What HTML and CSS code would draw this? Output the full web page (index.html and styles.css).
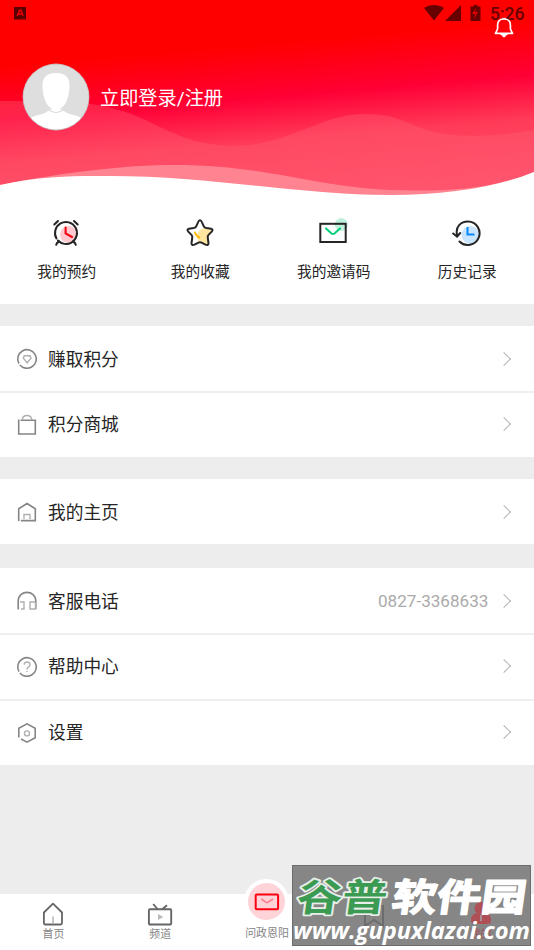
FILE: index.html
```html
<!DOCTYPE html>
<html lang="zh-CN">
<head>
<meta charset="utf-8">
<title>我的</title>
<link rel="stylesheet" href="styles.css">
</head>
<body>
<div class="app">
  <header class="hero">
    <svg class="hero-bg" viewBox="0 0 534 200">
      <defs>
        <linearGradient id="sky" gradientUnits="userSpaceOnUse" x1="250" y1="0" x2="267" y2="200">
          <stop offset="0" stop-color="#ff0000"/><stop offset=".22" stop-color="#ff0000"/>
          <stop offset=".49" stop-color="#ff0035"/><stop offset=".53" stop-color="#ff0a3c"/><stop offset=".71" stop-color="#ff3b58"/><stop offset="1" stop-color="#ff5068"/>
        </linearGradient>
        <linearGradient id="wave" gradientUnits="userSpaceOnUse" x1="0" y1="100" x2="0" y2="195">
          <stop offset="0" stop-color="#ff667a" stop-opacity=".34"/><stop offset="1" stop-color="#ff5a70" stop-opacity=".4"/>
        </linearGradient>
      </defs>
      <rect width="534" height="200" fill="url(#sky)"/>
      <path d="M0 101C40 101 65 102 90 104C145 111 160 134 205 143C280 157 312 114 365 114C405 114 412 130 445 134C477 138 505 135 534 130V200H0Z" fill="url(#wave)"/>
      <path d="M0 185C65 172 125 165 175 165C265 165 315 187 390 190C450 192 495 188 534 172V200H0Z" fill="#ff8391"/>
      <path d="M0 185C45 175 80 176 110 176C210 176 300 195 390 195C450 195 500 186 534 172V200H0Z" fill="#fff"/>
    </svg>
    <div class="status">
      <svg width="13" height="13" viewBox="0 0 13 13"><rect width="12" height="12.5" fill="#590000"/><path d="M3.3 9 5.5 3.3H7L9 9M4.3 7H8" fill="none" stroke="#f00000" stroke-width="1.5"/><path d="M7 11.5h4" stroke="#a00000" stroke-width=".7"/></svg>
      <div class="status-right">
        <svg width="58" height="17" viewBox="0 0 58 17" fill="#690000"><path d="M0 3C6-1 14-1 20 3L10 15.5Z"/><path d="M37 0V16H21Z"/><path d="M46.5 1.5h3V0h4v1.5h3V16h-10z"/><path d="m52 3-4 6h3l-1 5 4-7h-3z" fill="#e00008"/></svg>
        <span>5:26</span>
      </div>
    </div>
    <svg class="bell" width="20" height="21" viewBox="0 0 20 21"><path d="M1.5 16.4H18.5L16.4 12V8Q16.4 2 10 2Q3.6 2 3.6 8V12Z" fill="none" stroke="#fff" stroke-width="1.7" stroke-linejoin="round"/><path d="M8 1.4h4M6.5 17h7q-1 1.2-3.5 3.2Q7.5 18.2 6.5 17Z" fill="#fff" stroke="#fff" stroke-width=".8"/></svg>
    <div class="profile">
      <svg width="68" height="68" viewBox="0 0 68 68">
        <defs><clipPath id="face"><circle cx="34" cy="34" r="32.6"/></clipPath></defs>
        <circle cx="34" cy="34" r="33.4" fill="#c8b8ba"/><circle cx="34" cy="34" r="32.6" fill="#dedede"/>
        <path clip-path="url(#face)" d="M27 46C26 51 16 51 8 55V68H60V55C52 51 42 51 41 46Z" fill="#fff"/>
        <path d="M24 40Q28 49 34 49T44 40V46Q38 50 34 50T24 46Z" fill="#dedede"/>
        <path d="M34 10C43 10 48 14 47.5 24C47 35 43 46.500 34 46.500S21 35 20.500 24C20 14 25 10 34 10Z" fill="#fff"/>
      </svg>
      <span>立即登录/注册</span>
    </div>
  </header>

  <nav class="shortcuts">
    <a><svg width="30" height="30" viewBox="0 0 30 30"><circle cx="17.500" cy="16.500" r="8.500" fill="#ffc9cf"/><g fill="none" stroke="#252525" stroke-width="2" stroke-linecap="round"><circle class="clock-ring" cx="15" cy="15" r="11"/><path d="M3.300 6.500 7 3M23 3 26.700 6.500M5.200 26.800Q5.500 24.800 8 23.500M24.800 26.800Q24.500 24.800 22 23.500"/><path d="M14.600 9.500V15.500L21 19" stroke="#f4000e"/></g></svg><span>我的预约</span></a>
    <a><svg width="30" height="30" viewBox="0 0 30 30"><defs><clipPath id="star"><path d="M15 2 19 10 28 12 23 18 24 27 15 24 6 27 7 18 2 12 11 10Z"/></clipPath></defs><circle cx="20.500" cy="18.500" r="8.500" fill="#ffe6a0" clip-path="url(#star)"/><path d="M15 2.300Q16.200 2.300 17 4.300L18.800 8.300Q19.300 9.600 21.500 10L26 10.700Q28.700 11.300 26.700 13.600L23.500 16.900Q22.400 18 22.800 20L23.500 25Q23.500 28 20.500 26.700L16.500 24.600Q15 23.800 13.500 24.600L9.500 26.700Q6.500 28 6.500 25L7.200 20Q7.600 18 6.500 16.900L3.300 13.600Q1.300 11.300 4 10.700L8.500 10Q10.700 9.600 11.200 8.300L13 4.300Q13.800 2.300 15 2.300Z" fill="none" stroke="#252525" stroke-width="2"/><path d="M10 14.500Q11.500 18.500 14.300 19.500" fill="none" stroke="#ffb900" stroke-width="2" stroke-linecap="round"/></svg><span>我的收藏</span></a>
    <a><svg width="30" height="30" viewBox="0 0 30 30"><circle cx="23.300" cy="6.500" r="6.500" fill="#bff1dc"/><rect x="2.300" y="5.800" width="25.400" height="18.200" fill="none" stroke="#252525" stroke-width="2"/><path d="M8 10.500 13.500 15.500Q15 16.500 16.500 15.500L22 10.500" fill="none" stroke="#00ce79" stroke-width="2" stroke-linecap="round"/></svg><span>我的邀请码</span></a>
    <a><svg width="30" height="30" viewBox="0 0 30 30"><circle cx="18.500" cy="17" r="9" fill="#c9e4ff"/><path d="M5.200 17.500C2.800 8.500 9.200 3.600 16 3.600A11.700 11.700 0 1 1 7.500 23.500M1.200 15.500 5.100 18.700 8.200 15" fill="none" stroke="#252525" stroke-width="2" stroke-linecap="round"/><path d="M15.500 9V16.500H22.500" fill="none" stroke="#0589ff" stroke-width="2"/></svg><span>历史记录</span></a>
  </nav>

  <main class="groups">
    <section class="group">
      <div class="row"><svg class="icon" viewBox="0 0 22 22"><circle class="ring" cx="11" cy="11" r="9.300"/><path class="pale" d="M8.200 7.700H14L15 10.200 11.200 14.800 7.300 10.200Z"/></svg><span class="label">赚取积分</span><i class="arrow"></i></div>
      <div class="row"><svg class="icon" viewBox="0 0 22 22"><path d="M2.700 5.500V20H19.300V6.200H4.500"/><path class="pale" d="M6.200 6Q6.500 1.500 11 1.500T15.800 6"/></svg><span class="label">积分商城</span><i class="arrow"></i></div>
    </section>
    <section class="group">
      <div class="row"><svg class="icon" viewBox="0 0 22 22"><path d="M2.700 20V7.700L11 2.500 19.300 7.700V19.600H4.800"/><path class="pale" d="M8 18V13.500H14V18"/></svg><span class="label">我的主页</span><i class="arrow"></i></div>
    </section>
    <section class="group wide-gap">
      <div class="row"><svg class="icon" viewBox="0 0 22 22"><path d="M2.200 19.500V11C2.200-.5 19.800-.5 19.800 11V19"/><path class="pale" d="M4 12H8V19H5M19 12H14V19H19.500V12"/></svg><span class="label">客服电话</span><span class="phone">0827-3368633</span><i class="arrow"></i></div>
      <div class="row"><svg class="icon" viewBox="0 0 22 22"><circle class="ring" cx="11" cy="11" r="9.300"/><path class="pale" d="M8 8.500Q8.500 6 11.200 6T14 8.800Q14 10.400 12 11.500Q11 12 11 13.500M11 15V16"/></svg><span class="label">帮助中心</span><i class="arrow"></i></div>
      <div class="row"><svg class="icon" viewBox="0 0 22 22"><path d="M2.800 15.500V6.200L11 1.800 19.200 6.200V15.800L11 20.200 5 17"/><circle class="pale" cx="11" cy="11.400" r="2.500"/></svg><span class="label">设置</span><i class="arrow"></i></div>
    </section>
  </main>

  <div class="watermark-plate"></div>
  <footer class="tabs">
    <a class="tab"><svg width="26" height="24" viewBox="0 0 26 24" fill="none" stroke="#666" stroke-width="1.800" stroke-linejoin="round"><path d="M3.900 10.500 13 1.700 22 10.500V21Q22 22.500 20.500 22.500H5.400Q3.900 22.500 3.900 21Z"/><path d="M13 14.500V21" stroke="#aaa" stroke-width="1.300"/></svg><span>首页</span></a>
    <a class="tab"><svg width="26" height="24" viewBox="0 0 26 24" fill="none" stroke="#666" stroke-width="1.900" stroke-linejoin="round"><rect x="1.900" y="7.300" width="22.300" height="15.200" rx="1"/><path d="M6.200 2 10.500 7M20 3.200 15.500 7"/><path d="M11 12V18L16.300 15Z" fill="#bbb" stroke="none"/></svg><span>频道</span></a>
    <a class="tab tab-main"><div class="disc"><svg width="26" height="18" viewBox="0 0 26 18" fill="none" stroke-width="2"><rect x="1.700" y="1.500" width="22.400" height="14.800" rx="1" stroke="#fe0010"/><path d="M7.200 6 12 9.300Q13 9.800 14 9.300L19 6" stroke="#ff8290" stroke-width="1.700"/></svg></div><span>问政恩阳</span></a>
    <a class="tab tab-saved"><svg width="22" height="24" viewBox="0 0 22 24" fill="none" stroke="#333" stroke-width="2"><path d="M2 1V21L11 15 20 21V1Z"/></svg></a>
    <a class="tab tab-mine"><svg width="26" height="24" viewBox="0 0 26 24"><path d="M13 0A6.300 6.300 0 0 1 17.500 10.800Q23 13 23 17.500Q23 22 20 22H6Q3 22 3 17.500Q3 13 8.500 10.800A6.300 6.300 0 0 1 13 0Z" fill="#ed0010"/><path d="M13 13v6" stroke="#ddd" stroke-width="1.500"/></svg><span>我的</span></a>
  </footer>
  <div class="watermark">
    <svg width="239" height="81" viewBox="0 0 239 81">
      <g class="brand" transform="skewX(-8)"><text class="green" x="10" y="46.500" textLength="90" lengthAdjust="spacingAndGlyphs">谷普</text><text class="white" x="105" y="46.500" textLength="134" lengthAdjust="spacingAndGlyphs">软件园</text></g>
      <text class="site" x="1" y="73.500" textLength="237" lengthAdjust="spacingAndGlyphs">www.gupuxlazai.com</text>
    </svg>
  </div>
</div>
</body>
</html>
```
FILE: styles.css
```css
* { box-sizing: border-box; }
body { margin: 0; }
.app {
  width: 534px; height: 950px; position: relative; overflow: hidden;
  display: flex; flex-direction: column; background: #ededed; color: #252525;
  font-family: Roboto, "Noto Sans CJK SC", sans-serif;
}
svg { display: block; flex: none; }
.hero { height: 200px; position: relative; flex: none; background: #fff; }
.hero-bg { position: absolute; inset: 0; width: 534px; height: 200px; }
.status { position: relative; height: 28px; display: flex; justify-content: space-between; padding: 7px 9px 0 14px; }
.status-right { display: flex; gap: 8px; margin-top: -2px; color: #690000; }
.status-right span { font-size: 17.5px; line-height: 18px; font-weight: 500; width: 35px; }
.bell { position: absolute; right: 20px; top: 17px; }
.profile { position: relative; display: flex; align-items: center; gap: 10.5px; padding: 35px 0 0 21.5px; color: #fff; font-size: 19.2px; }
.profile span { padding-bottom: 1px; }
.shortcuts { height: 104px; flex: none; background: #fff; display: grid; grid-template-columns: repeat(4, 1fr); }
.shortcuts a { display: flex; flex-direction: column; align-items: center; gap: 13px; padding-top: 18px; font-size: 14.7px; line-height: 22px; }
.shortcuts svg { margin-left: -1px; }
.clock-ring { stroke-dasharray: 66.1 3; transform-origin: 15px 15px; transform: rotate(150deg); }
.groups { display: flex; flex-direction: column; gap: 22px; padding-top: 22px; }
.group { background: #fff; }
.wide-gap { margin-top: 2px; }
.row { height: 65px; display: flex; align-items: center; padding: 1px 20px 0 16px; }
.row + .row { height: 66px; border-top: 2px solid #efefef; padding: 0 20px 1px 16px; }
.icon { width: 22px; height: 22px; fill: none; stroke: #858585; stroke-width: 1.6; }
.ring { stroke-dasharray: 56.4 2; transform-origin: 11px 11px; transform: rotate(150deg); }
.pale { stroke: #b0b0b0; stroke-width: 1.4; }
.label { margin-left: 10px; font-size: 17.7px; line-height: 26px; flex: 1; padding-top: 1px; }
.phone { color: #aaa; font-size: 17.1px; margin-right: 10px; width: 111px; white-space: nowrap; padding-bottom: 1px; }
.arrow { width: 10px; height: 10px; border: solid #b2b2b2; border-width: 1.7px 1.7px 0 0; transform: rotate(45deg); margin: 0 5px 1px 0; }
.tabs { position: absolute; left: 0; right: 0; bottom: 0; height: 56px; background: #fff; display: grid; grid-template-columns: repeat(5, 1fr); color: #858585; font-size: 10.9px; line-height: 16px; }
.tab { display: flex; flex-direction: column; align-items: center; padding-top: 8px; white-space: nowrap; }
.tab span { padding-top: 1px; }
.tab-main { padding: 0; margin-top: -15px; }
.disc { flex: none; width: 45px; height: 45px; border-radius: 50%; background: #ffd4d9; border: 4px solid #fff; display: flex; align-items: center; justify-content: center; }
.tab-main span { margin-top: 1px; }
.tab-saved, .tab-mine { position: relative; z-index: 2; }
.tab-saved { opacity: .3; padding-top: 11px; }
.tab-mine { color: #d00010; opacity: .4; }
.watermark-plate, .watermark { position: absolute; left: 292px; top: 865px; width: 239px; height: 81px; }
.watermark-plate { z-index: 1; background: #868686; border: 1px solid #6c6c6c; }
.watermark { z-index: 3; }
.watermark svg { overflow: visible; }
.brand text { font-family: "Noto Sans CJK SC", sans-serif; font-weight: 700; font-size: 38px; paint-order: stroke; stroke-linejoin: round; }
.green { fill: #3c9b53; stroke: #e8eee9; stroke-width: 3.5px; }
.white { fill: #fff; stroke: #fff; stroke-width: 1.5px; }
.site { font: italic 700 24px "Open Sans", sans-serif; fill: #fff; }
```
